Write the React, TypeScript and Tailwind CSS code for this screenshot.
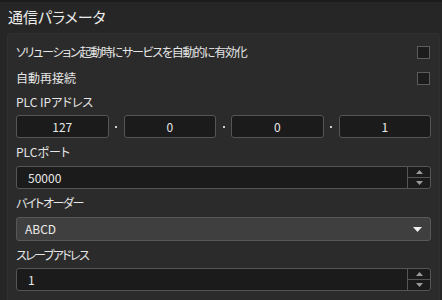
import React from "react";

const font = {
  fontFamily: '"Noto Sans CJK JP", "Noto Sans", sans-serif',
};

function Checkbox() {
  return <div className="w-[13px] h-[13px] border border-[#5c5c5c] bg-[#1c1c1c] mr-[1px]" />;
}

function IpBox({ v }: { v: string }) {
  return (
    <div className="flex-1 h-[23px] rounded-[3px] border border-[#555] bg-[#1b1b1b] flex items-center justify-center text-[12px] text-[#e8e8e8]">
      {v}
    </div>
  );
}

function Dot() {
  return (
    <div className="w-[15px] flex items-center justify-center">
      <div className="w-[2px] h-[2px] bg-[#cfcfcf]" />
    </div>
  );
}

function Spin({ v }: { v: string }) {
  return (
    <div className="h-[23px] rounded-[3px] border border-[#555] bg-[#1b1b1b] flex text-[12px] text-[#e8e8e8]">
      <div className="flex-1 flex items-center pl-[11px]">{v}</div>
      <div className="w-[23px] border-l border-[#555] flex flex-col">
        <div className="flex-1 flex items-center justify-center border-b border-[#555]">
          <svg width="7" height="4" viewBox="0 0 7 4"><path d="M3.5 0 L7 4 L0 4 Z" fill="#9a9a9a" /></svg>
        </div>
        <div className="flex-1 flex items-center justify-center">
          <svg width="7" height="4" viewBox="0 0 7 4"><path d="M0 0 L7 0 L3.5 4 Z" fill="#9a9a9a" /></svg>
        </div>
      </div>
    </div>
  );
}

export default function App() {
  return (
    <div
      className="w-[442px] h-[300px] overflow-hidden bg-[#262626] text-[#e6e6e6] [font-feature-settings:'palt']"
      style={font}
    >
      <div className="h-[2px] bg-[#1c1c1c]" />
      <div className="h-[31px] flex items-center pl-[8px] text-[15px] text-[#ececec]">通信パラメータ</div>
      <div className="ml-[7px] mr-[2px] h-[280px] rounded-t-[4px] bg-[#2b2b2b] border-t border-l border-r border-[#303030] px-[8px] pt-[5px] text-[12px]">
        <div className="h-[26px] flex items-center justify-between">
          <span className="tracking-[-1.25px]">ソリューション起動時にサービスを自動的に有効化</span>
          <Checkbox />
        </div>
        <div className="h-[26px] flex items-center justify-between">
          <span>自動再接続</span>
          <Checkbox />
        </div>
        <div className="h-[24px] flex items-center pb-[2px]">PLC IPアドレス</div>
        <div className="flex">
          <IpBox v="127" />
          <Dot />
          <IpBox v="0" />
          <Dot />
          <IpBox v="0" />
          <Dot />
          <IpBox v="1" />
        </div>
        <div className="h-[28px] flex items-center">PLCポート</div>
        <Spin v="50000" />
        <div className="h-[28px] flex items-center tracking-[-1.4px]">バイトオーダー</div>
        <div className="h-[24px] rounded-[3px] border border-[#585858] bg-[#3f3f3f] flex items-center justify-between pl-[8px] pr-[8px] text-[#ececec]">
          <span>ABCD</span>
          <svg width="9" height="5" viewBox="0 0 9 5"><path d="M0 0 L9 0 L4.5 5 Z" fill="#f0f0f0" /></svg>
        </div>
        <div className="h-[27px] flex items-center tracking-[-1.6px]">スレーブアドレス</div>
        <Spin v="1" />
      </div>
    </div>
  );
}
